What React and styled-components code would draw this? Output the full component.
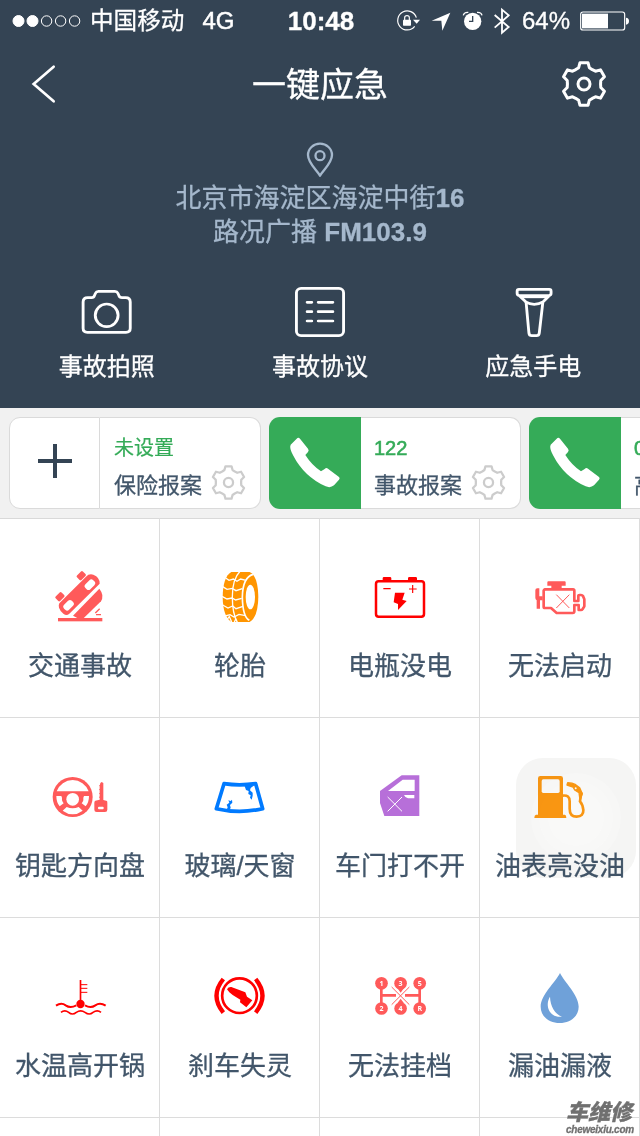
import React from 'react'
import styled, { createGlobalStyle } from 'styled-components'

const fonts = `'Liberation Sans', 'Noto Sans CJK SC', sans-serif`

const GlobalStyle = createGlobalStyle`
  body {
    margin: 0;
    background: #ffffff;
    font-family: ${fonts};
    -webkit-text-stroke: 0.3px currentColor;
  }
  svg {
    display: block;
    flex-shrink: 0;
  }
`

const Screen = styled.div`
  position: relative;
  width: 640px;
  height: 1136px;
  overflow: hidden;
  background: #ffffff;
`
const Header = styled.header`
  height: 408px;
  background: #344454;
  color: #ffffff;
`
const StatusBar = styled.div`
  display: grid;
  grid-template-columns: 1fr auto 1fr;
  align-items: center;
  height: 41px;
  padding: 0 10px 0 12px;
  font-size: 24px;
  line-height: 40px;
`
const StatusSide = styled.div`
  display: flex;
  align-items: center;
  justify-content: ${({ $end }) => ($end ? 'flex-end' : 'flex-start')};
`
const Carrier = styled.span`
  margin-left: 9px;
  font-size: 23.6px;
`
const Network = styled.span`
  margin-left: 18px;
  -webkit-text-stroke: 0.5px #ffffff;
`
const Clock = styled.strong`
  font-size: 26px;
`
const Percent = styled.span`
  width: 50px;
  margin: 0 8px 0 11px;
`
const StatusIcon = styled.svg`
  width: ${({ $width }) => $width}px;
  height: 30px;
  margin-left: ${({ $before }) => $before || 0}px;
`
const NavBar = styled.div`
  display: flex;
  align-items: center;
  justify-content: space-between;
  height: 86px;
  padding: 0 33px 0 30px;
`
const NavSide = styled.div`
  display: flex;
  width: 50px;
  justify-content: ${({ $end }) => ($end ? 'flex-end' : 'flex-start')};
`
const Title = styled.h1`
  margin: 2px 0 0 3px;
  font-size: 34px;
  font-weight: 400;
  line-height: 50px;
`
const Place = styled.div`
  display: flex;
  flex-direction: column;
  align-items: center;
  padding-top: 14px;
  color: #a5b8cc;
  font-size: 26px;
  line-height: 34px;
`
const Pin = styled.svg`
  margin-bottom: 2px;
`
const Actions = styled.div`
  display: grid;
  grid-template-columns: repeat(3, 1fr);
  margin-top: 35px;
`
const Action = styled.div`
  display: flex;
  flex-direction: column;
  align-items: center;
  font-size: 24px;
  line-height: 36px;
  gap: 9px;
`
const Contacts = styled.div`
  display: flex;
  gap: 8px;
  box-sizing: border-box;
  height: 111px;
  padding: 9px 0 0 9px;
  overflow: hidden;
  background: #f1f1f1;
  border-bottom: 1px solid #d9d9d9;
`
const Card = styled.div`
  display: flex;
  flex-shrink: 0;
  width: 252px;
  height: 92px;
`
const CardIcon = styled.div`
  display: flex;
  align-items: center;
  justify-content: center;
  flex-shrink: 0;
  box-sizing: border-box;
  width: ${({ $green }) => ($green ? 92 : 91)}px;
  padding-bottom: ${({ $green }) => ($green ? 0 : 4)}px;
  border: ${({ $green }) => ($green ? 'none' : '1px solid #dadada')};
  border-radius: 11px 0 0 11px;
  background: ${({ $green }) => ($green ? '#35ab58' : '#ffffff')};
`
const CardBody = styled.div`
  display: flex;
  flex-direction: column;
  flex-grow: 1;
  box-sizing: border-box;
  padding: 14px 14px 0 ${({ $green }) => ($green ? 13 : 14)}px;
  border: 1px solid #dadada;
  border-left: none;
  border-radius: 0 11px 11px 0;
  background: #ffffff;
`
const Phone = styled.div`
  color: #35ab58;
  font-size: 20px;
  line-height: 32px;
  white-space: nowrap;
  -webkit-text-stroke-width: ${({ $green }) => ($green ? 0.6 : 0.2)}px;
`
const CardRow = styled.div`
  display: flex;
  align-items: center;
  justify-content: space-between;
  height: 37px;
  color: #42566a;
  font-size: 22px;
  white-space: nowrap;
`
const Grid = styled.div`
  display: grid;
  grid-template-columns: repeat(4, 160px);
  grid-auto-rows: 200px;
  margin-top: -1px;
`
const Cell = styled.div`
  display: flex;
  flex-direction: column;
  align-items: center;
  box-sizing: border-box;
  padding-top: 46px;
  border-right: 1px solid #dcdcdc;
  border-bottom: 1px solid #dcdcdc;
  color: #42566a;
  font-size: 26px;
  line-height: 36px;
`
const CellIcon = styled.svg`
  width: 64px;
  height: 64px;
  margin: 0 -1px 20px 0;
`
const CellLabel = styled.div`
  margin-right: -1px;
  white-space: nowrap;
`
const TouchPad = styled.div`
  position: absolute;
  left: 516px;
  top: 758px;
  display: flex;
  align-items: center;
  justify-content: center;
  width: 120px;
  height: 120px;
  border-radius: 27px;
  background: #f5f5f4;
  mix-blend-mode: multiply;
`
const TouchRing = styled.div`
  display: flex;
  align-items: center;
  justify-content: center;
  width: ${({ $size }) => $size}px;
  height: ${({ $size }) => $size}px;
  border-radius: 50%;
  background: rgba(255, 255, 255, 0.2);
`
const Watermark = styled.div`
  position: absolute;
  right: 6px;
  bottom: 1px;
  width: 68px;
  color: #707070;
  font-style: italic;
  font-weight: 700;
  white-space: nowrap;
`
const WatermarkName = styled.div`
  font-size: 22px;
  font-weight: 900;
  line-height: 22px;
`
const WatermarkSite = styled.div`
  font-size: 10px;
  line-height: 11px;
  letter-spacing: -0.25px;
`

// one tooth, turned six times round the centre
const tooth = [[-16, -49], [-12, -64], [12, -64], [16, -49], [25, -43]]
const gearPoints = [0, 60, 120, 180, 240, 300]
  .flatMap((deg) => {
    const a = (deg * Math.PI) / 180
    return tooth.map(([x, y]) =>
      [x * Math.cos(a) - y * Math.sin(a), x * Math.sin(a) + y * Math.cos(a)]
        .map((n) => n.toFixed(1))
        .join(',')
    )
  })
  .join(' ')

function Gear({ size, color }) {
  return (
    <svg width={size} height={size} viewBox="-69 -69 138 138" fill="none" stroke={color} strokeWidth="9">
      <polygon points={gearPoints} strokeLinejoin="round" />
      <circle r="18" />
    </svg>
  )
}

function PhoneIcon() {
  return (
    <svg width="54" height="54" viewBox="686 111 162 162" fill="#ffffff">
      <path d="M712 119Q717 114 722 119L746 149Q750 154 746 159L738 168Q757 198 785 217L796 210Q801 205 806 209L839 234Q843 238 839 242L824 259Q813 268 799 262Q734 232 702 170Q689 147 694 137Z" />
    </svg>
  )
}

function Plus() {
  return (
    <svg width="36" height="36" viewBox="0 0 36 36" stroke="#344454" strokeWidth="4">
      <path d="M1 18H35M18 1V35" />
    </svg>
  )
}

const actions = [
  {
    label: '事故拍照',
    view: '107.5 42 156.8 168',
    icon: (
      <>
        <path d="M132 83H143Q149 83 151 76L154 69Q156 64 162 64H208Q214 64 216 69L219 76Q221 83 228 83H238Q251 83 251 96V175Q251 187 239 187H131Q119 187 119 175V96Q119 83 132 83Z" />
        <ellipse cx="185" cy="136" rx="32" ry="34" />
      </>
    ),
  },
  {
    label: '事故协议',
    view: '705.6 42 156.8 168',
    icon: (
      <>
        <rect x="718" y="55" width="132" height="142" rx="13" />
        <path d="M748 97H761M779 97H820M748 125H761M779 125H820M748 153H761M779 153H820" strokeLinecap="round" />
      </>
    ),
  },
  {
    label: '应急手电',
    view: '1303 42 156.8 168',
    icon: (
      <>
        <path d="M1342 58H1427Q1432 58 1432 64V70Q1432 76 1426 77H1343Q1337 76 1337 70V64Q1337 58 1342 58Z" />
        <path d="M1344 78L1362 96L1370 189Q1371 197 1378 197H1391Q1398 197 1399 189L1409 96L1426 78M1359 95Q1385 111 1411 95" />
        <path d="M1350 82H1419" strokeWidth="5" />
      </>
    ),
  },
]

const cells = [
  {
    label: '交通事故',
    view: '144 42 192 192',
    icon: (
      <g fill="#ff5a5a">
        <path d="M178 160L258 80Q267 70 280 74Q300 82 299 101L208 191Q200 198 191 192Q180 183 177 173Q175 165 178 160Z" />
        <path d="M219 197L298 116Q304 123 307 135Q308 148 303 154L249 206H236Z" />
        <rect x="231" y="68" width="25" height="19" rx="4" transform="rotate(-45 243 77)" />
        <rect x="167" y="131" width="25" height="19" rx="4" transform="rotate(-45 179 140)" />
        <rect x="189" y="156" width="33" height="21" rx="8" fill="#fff" transform="rotate(-45 205 166)" />
        <rect x="253" y="94" width="33" height="21" rx="8" fill="#fff" transform="rotate(-45 269 104)" />
        <rect x="174" y="204" width="133" height="10" />
        <path d="M286 189L299 176M288 194H303" stroke="#ff5a5a" strokeWidth="4" />
      </g>
    ),
  },
  {
    label: '轮胎',
    view: '624 42 192 192',
    icon: (
      <g fill="none" stroke="#fff" strokeWidth="4">
        <path d="M694 66H749Q774 78 775 140Q774 202 749 216H694Q669 200 668 141Q669 80 694 66Z" fill="#ff9500" stroke="none" />
        <ellipse cx="751" cy="141" rx="14" ry="37" fill="#fff" stroke="none" />
        <path d="M759 73Q728 82 727 141Q728 201 748 211" strokeWidth="5" />
        <path d="M720 64Q697 88 697 140Q697 190 712 217" />
        <path d="M677 84L687 91L700 87L711 94L722 87L738 91" />
        <path d="M668 110L681 118L697 115L708 122L727 116" />
        <path d="M666 139L681 147L696 144L707 150L725 145" />
        <path d="M668 165L684 174L698 168L708 176L729 169" />
        <path d="M676 198L690 194L702 201L717 193L737 197" />
        <path d="M681 209L688 200L695 216M703 216L708 206" strokeWidth="4" />
      </g>
    ),
  },
  {
    label: '电瓶没电',
    view: '144 42 192 192',
    icon: (
      <g fill="none" stroke="#ff0000">
        <rect x="168" y="94" width="144" height="106" rx="8" strokeWidth="7.500" />
        <path d="M188 95V85Q188 81 192 81H210Q214 81 214 85V95ZM264 95V85Q264 81 268 81H287Q291 81 291 85V95Z" fill="#ff0000" stroke="none" />
        <path d="M190 116H212M267 117H290M278 105V129" strokeWidth="3.500" />
        <path d="M225 128H254L247 149L260 153L234 180V162L221 157Z" fill="#ff0000" stroke="none" />
      </g>
    ),
  },
  {
    label: '无法启动',
    view: '624 42 192 192',
    icon: (
      <g fill="none" stroke="#ff5a5a" strokeWidth="8">
        <path d="M685 94H734Q737 94 737 97V107H725V117H694V107H682V97Q682 94 685 94Z" fill="#ff5a5a" stroke="none" />
        <path d="M674 118H759Q763 118 763 122V153H775V138Q775 135 779 135H783Q787 135 789 138L793 148V169L788 177Q786 180 783 180H776V165H763V184Q763 189 758 189H710L693 174H675Q671 174 671 170V122Z" strokeLinejoin="round" />
        <path d="M646 143V121Q646 115 652 115H658V139H668V151H660V176H650V151Q646 148 646 143Z" fill="#ff5a5a" stroke="none" />
        <path d="M709 134L748 174M748 134L709 174" strokeWidth="3" />
      </g>
    ),
  },
  {
    label: '钥匙方向盘',
    view: '144 42 192 192',
    icon: (
      <g fill="#ff5a5a">
        <circle cx="218" cy="141" r="60" />
        <path
          fill="#fff"
          d="M170 124A51 51 0 0 1 266 124ZM169 138H184Q187 142 186 151Q188 157 191 160L179 169Q169 157 169 138ZM267 138H252Q249 142 250 151Q248 157 245 160L257 169Q267 157 267 138ZM188 182L200 171Q218 179 236 171L248 182Q233 193 218 193Q203 193 188 182Z"
        />
        <circle cx="218" cy="148" r="19" fill="#fff" />
        <path d="M301 99L305 96L310 99V150L321 153Q322 155 322 158V179Q322 186 315 186H290Q283 186 283 179V158Q283 154 286 152L299 149V144L297 142L299 139V133L297 131L299 128V121L297 119L299 116V109L297 107L300 104Z" />
        <rect x="294" y="170" width="17" height="8" rx="3" fill="#fff" />
      </g>
    ),
  },
  {
    label: '玻璃/天窗',
    view: '624 42 192 192',
    icon: (
      <g fill="#007aff">
        <path d="M672 101Q718 108 767 101L788 176Q718 192 649 176Z" fill="none" stroke="#007aff" strokeWidth="11" strokeLinejoin="round" />
        <path d="M733 106H763L752 114L750 121L758 128V137L755 149L750 143L752 136L745 132L746 123L738 120Z" />
        <path d="M679 182L683 172L680 164L688 158L685 151L692 153L696 149L697 158L690 165L692 173L687 184Z" />
      </g>
    ),
  },
  {
    label: '车门打不开',
    view: '144 42 192 192',
    icon: (
      <g>
        <path fill="#b76fd9" d="M180 123L245 76H298V198H193L180 159Z" />
        <path fill="#fff" d="M204 123L248 89H284V123ZM252 135H283V145H264Q255 143 252 135Z" />
        <path stroke="#fff" strokeWidth="3" d="M203 141L246 184M246 141L203 184" />
      </g>
    ),
  },
  {
    label: '油表亮没油',
    view: '624 42 192 192',
    icon: (
      <g fill="none" stroke="#ff9a12">
        <path d="M654 85Q654 78 661 78H722Q729 78 729 85V194H735Q739 195 739 204H643Q643 195 648 194H654Z" fill="#ff9a12" stroke="none" />
        <rect x="665" y="88" width="54" height="41" rx="5" fill="#fff" stroke="none" />
        <path d="M728 137Q749 134 749 154V176Q749 200 770 200Q791 199 790 180Q788 163 780 154Q782 140 784 127" strokeWidth="8" />
        <path d="M743 98Q757 98 767 104L779 113L787 131L780 150L777 128L764 120L759 111L741 105Z" fill="#ff9a12" strokeWidth="4" strokeLinejoin="round" />
        <circle cx="767" cy="115" r="3" fill="#fff" stroke="none" />
      </g>
    ),
  },
  {
    label: '水温高开锅',
    view: '144 12 192 192',
    icon: (
      <g fill="none" stroke="#ff0000" strokeWidth="5">
        <path d="M241.500 60V130" />
        <path d="M243 74H262M243 85H262M243 97H262" strokeWidth="3" />
        <circle cx="241.500" cy="132" r="12.500" fill="#ff0000" stroke="none" />
        <path d="M168 137Q184 126 197 136Q211 146 229 136M255 136Q272 146 286 136Q300 126 317 137" strokeWidth="6" />
        <path d="M183 157Q194 148 206 157Q217 167 229 157Q242 148 255 157Q268 167 279 157Q292 148 303 157" />
      </g>
    ),
  },
  {
    label: '刹车失灵',
    view: '624 12 192 192',
    icon: (
      <g fill="none" stroke="#ff0000">
        <circle cx="718.500" cy="107" r="52" strokeWidth="8" />
        <path d="M670 57Q629 107 670 158M767 57Q808 107 767 158" strokeWidth="13" />
        <path d="M681 88Q685 80 694 81L736 97L741 110L757 121L739 142L720 127L721 119L698 105L688 97Z" fill="#ff0000" stroke="none" />
      </g>
    ),
  },
  {
    label: '无法挂档',
    view: '144 12 192 192',
    icon: (
      <g stroke="#ff5a5a" strokeWidth="8" fill="none">
        <path d="M184 70V145M299 70V145M184 106H228M255 106H299" />
        <path d="M232 84H252L242 98ZM232 130H252L242 116Z" fill="#ff5a5a" stroke="none" />
        {['1', '3', '5', '2', '4', 'R'].map((gear, i) => (
          <g key={gear} transform={`translate(${184.5 + (i % 3) * 57.3} ${i < 3 ? 70 : 145.5})`} stroke="none">
            <circle r="19" fill="#ff5a5a" />
            <text y="7.500" fill="#fff" fontSize="21" fontWeight="700" fontFamily="Open Sans" textAnchor="middle">
              {gear}
            </text>
          </g>
        ))}
        <path d="M215 81L268 134M268 81L215 134" stroke="#fff" strokeWidth="7" />
        <path d="M215 81L268 134M268 81L215 134" strokeWidth="3" />
      </g>
    ),
  },
  {
    label: '漏油漏液',
    view: '624 12 192 192',
    icon: (
      <g>
        <path fill="#6fa1d9" d="M720 39C733 66 776 105 776 140C776 170 750 189 719 189C688 189 662 170 662 140C662 105 707 66 720 39Z" />
        <path fill="#fff" d="M690 110C674 135 687 174 726 170C704 161 691 139 690 110Z" />
      </g>
    ),
  },
  { label: '', view: '0 0 1 1' },
  { label: '', view: '0 0 1 1' },
  { label: '', view: '0 0 1 1' },
  { label: '', view: '0 0 1 1' },
]

const contacts = [
  { phone: '未设置', label: '保险报案' },
  { phone: '122', label: '事故报案', green: true },
  { phone: '010', label: '高速报案', green: true },
]

function Status() {
  return (
    <StatusBar>
      <StatusSide>
        <svg width="69" height="14" viewBox="0 0 69 14" fill="none" stroke="#fff">
          <circle cx="6.500" cy="7" r="5.500" fill="#fff" />
          <circle cx="20.500" cy="7" r="5.500" fill="#fff" />
          <circle cx="34.600" cy="7" r="5.200" />
          <circle cx="48.600" cy="7" r="5.200" />
          <circle cx="62.600" cy="7" r="5.200" />
        </svg>
        <Carrier>中国移动</Carrier>
        <Network>4G</Network>
      </StatusSide>
      <Clock>10:48</Clock>
      <StatusSide $end>
        <StatusIcon $width={24} viewBox="228 16 72 90" fill="none" stroke="#fff" strokeWidth="3.500">
          <path d="M289 51A28.500 28.500 0 1 0 284 77" />
          <path d="M279 57H300L290 69Z" fill="#fff" stroke="none" />
          <rect x="249" y="57" width="24" height="18" rx="2" fill="#fff" stroke="none" />
          <path d="M254 58V51Q254 45 261 45Q268 45 268 51V58" />
        </StatusIcon>
        <StatusIcon $width={20} $before={11} viewBox="333 16 60 90" fill="#fff">
          <path d="M391 36L335 60H364L367 90Z" />
        </StatusIcon>
        <StatusIcon $width={22} $before={11} viewBox="426 16 66 90" fill="#fff">
          <circle cx="458" cy="62" r="26" />
          <path d="M458 46V62H447" fill="none" stroke="#344454" strokeWidth="4" />
          <path d="M430 44Q432 34 445 35M486 44Q484 34 471 35" fill="none" stroke="#fff" strokeWidth="4" />
        </StatusIcon>
        <StatusIcon $width={18} $before={9} viewBox="519 16 54 90" fill="none" stroke="#fff" strokeWidth="5.500">
          <path d="M524 43L566 79L546 96V27L566 44L524 81" />
        </StatusIcon>
        <Percent>64%</Percent>
        <StatusIcon $width={50} viewBox="780 16 150 90" fill="none" stroke="#fff" strokeWidth="3.500">
          <rect x="782" y="34" width="132" height="54" rx="7" />
          <rect x="786" y="39" width="78" height="44" fill="#fff" stroke="none" />
          <path d="M918 51Q927 52 927 61Q927 71 918 72Z" fill="#fff" stroke="none" />
        </StatusIcon>
      </StatusSide>
    </StatusBar>
  )
}

function App() {
  return (
    <Screen>
      <GlobalStyle />
      <Header>
        <Status />
        <NavBar>
          <NavSide>
            <svg width="28" height="40" viewBox="90 192 84 120" fill="none" stroke="#fff" strokeWidth="8">
              <path d="M161 200L101 252L161 304" strokeLinecap="round" />
            </svg>
          </NavSide>
          <Title>一键应急</Title>
          <NavSide $end>
            <Gear size={46} color="#ffffff" />
          </NavSide>
        </NavBar>
        <Place>
          <Pin width="28" height="38" viewBox="438 33 84 114" fill="none" stroke="#a5b8cc" strokeWidth="7">
            <path d="M480 137C470 120 444 99 444 75A36 34 0 0 1 516 75C516 99 490 120 480 137Z" strokeLinejoin="round" />
            <circle cx="480" cy="77" r="13.500" />
          </Pin>
          <div>北京市海淀区海淀中街<b>16</b></div>
          <div>路况广播 <b>FM103.9</b></div>
        </Place>
        <Actions>
          {actions.map(({ label, view, icon }) => (
            <Action key={label}>
              <svg width="56" height="56" viewBox={view} preserveAspectRatio="none" fill="none" stroke="#fff" strokeWidth="8">
                {icon}
              </svg>
              {label}
            </Action>
          ))}
        </Actions>
      </Header>
      <Contacts>
        {contacts.map(({ phone, label, green }) => (
          <Card key={label}>
            <CardIcon $green={green}>{green ? <PhoneIcon /> : <Plus />}</CardIcon>
            <CardBody $green={green}>
              <Phone $green={green}>{phone}</Phone>
              <CardRow>
                {label}
                <Gear size={35} color="#cccccc" />
              </CardRow>
            </CardBody>
          </Card>
        ))}
      </Contacts>
      <Grid>
        {cells.map(({ label, view, icon }, i) => (
          <Cell key={i}>
            <CellIcon viewBox={view}>{icon}</CellIcon>
            <CellLabel>{label}</CellLabel>
          </Cell>
        ))}
      </Grid>
      <TouchPad>
        <TouchRing $size={90}>
          <TouchRing $size={74}>
            <TouchRing $size={56} />
          </TouchRing>
        </TouchRing>
      </TouchPad>
      <Watermark>
        <WatermarkName>车维修</WatermarkName>
        <WatermarkSite>cheweixiu.com</WatermarkSite>
      </Watermark>
    </Screen>
  )
}

export default App
